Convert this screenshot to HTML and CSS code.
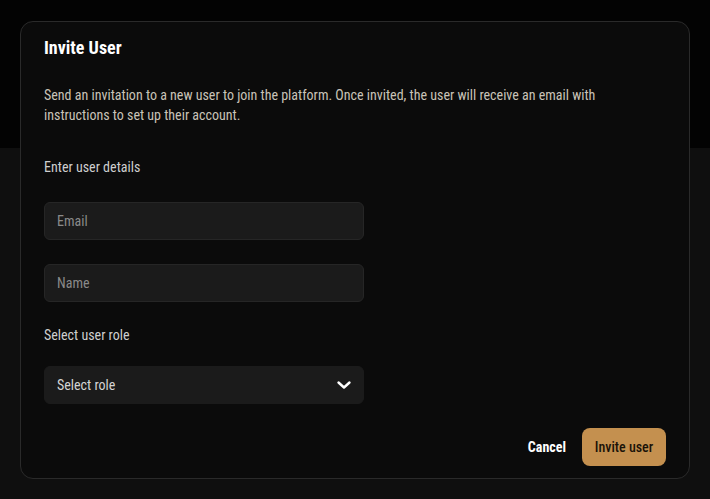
FILE: index.html
```
<!DOCTYPE html>
<html>
<head>
<meta charset="utf-8">
<link rel="stylesheet" href="styles.css">
</head>
<body>
<div class="page">
  <div class="page-top"></div>
  <div class="page-rest"></div>
</div>
<div class="overlay">
  <div class="modal">
    <h2 class="title">Invite User</h2>
    <p class="desc">Send an invitation to a new user to join the platform. Once invited, the user will receive an email with instructions to set up their account.</p>
    <div class="section-label">Enter user details</div>
    <div class="fields">
      <div class="input"><span class="ph">Email</span></div>
      <div class="input"><span class="ph">Name</span></div>
    </div>
    <div class="section-label role-label">Select user role</div>
    <div class="input select">
      <span class="sel-text">Select role</span>
      <svg class="chev" width="16" height="16" viewBox="0 0 16 16"><path d="M2.5 5.5 L8 10.5 L13.5 5.5" fill="none" stroke="#fff" stroke-width="2.4" stroke-linecap="round" stroke-linejoin="round"/></svg>
    </div>
    <div class="actions">
      <button class="btn-cancel">Cancel</button>
      <button class="btn-primary">Invite user</button>
    </div>
  </div>
</div>
</body>
</html>
```
FILE: styles.css
```
* { box-sizing: border-box; }
html, body { margin: 0; padding: 0; }
body {
  background: #0f0f0f;
  font-family: "Roboto Condensed", "Liberation Sans Narrow", "DejaVu Sans Condensed", Roboto, sans-serif;
  font-stretch: condensed;
  width: 710px;
  height: 499px;
  overflow: hidden;
}
.page { display: flex; flex-direction: column; height: 499px; }
.page-top { height: 148px; background: #030303; }
.page-rest { flex: 1; background: #0f0f0f; }
.overlay { position: absolute; left: 0; top: 0; width: 710px; height: 499px; padding: 21px 20px 0 20px; }
.modal {
  width: 670px;
  height: 458px;
  background: #0b0b0b;
  border: 1px solid #2a2a2a;
  border-radius: 13px;
  padding: 14px 23px 0 23px;
  display: flex;
  flex-direction: column;
}
.title {
  margin: 0;
  font-size: 18px;
  line-height: 24px;
  font-weight: 700;
  color: #ffffff;
}
.desc {
  margin: 25px 0 0 0;
  max-width: 580px;
  font-size: 14px;
  line-height: 20px;
  color: #c9c3b8;
}
.section-label {
  margin-top: 32px;
  font-size: 14px;
  line-height: 20px;
  color: #cfcfcf;
}
.fields { display: flex; flex-direction: column; gap: 24px; margin-top: 25px; }
.input {
  width: 320px;
  height: 38px;
  background: #1b1b1b;
  border: 1px solid #262626;
  border-radius: 6px;
  display: flex;
  align-items: center;
  padding: 0 12px;
  font-size: 14px;
}
.ph { color: #8a8a8a; }
.role-label { margin-top: 23px; }
.select { margin-top: 21px; justify-content: space-between; border-color: #1b1b1b; }
.sel-text { color: #d4d4d4; }
.chev { margin-right: -1px; }
.actions {
  display: flex;
  justify-content: flex-end;
  align-items: center;
  gap: 16px;
  margin-top: 24px;
}
button { font-family: inherit; font-stretch: condensed; border: none; cursor: pointer; }
.btn-cancel {
  background: transparent;
  color: #ffffff;
  font-weight: 700;
  font-size: 14px;
  padding: 0;
}
.btn-primary {
  background: #c4904f;
  color: #1a1208;
  font-weight: 500;
  font-size: 14px;
  height: 38px;
  width: 84px;
  border-radius: 8px;
}
```
